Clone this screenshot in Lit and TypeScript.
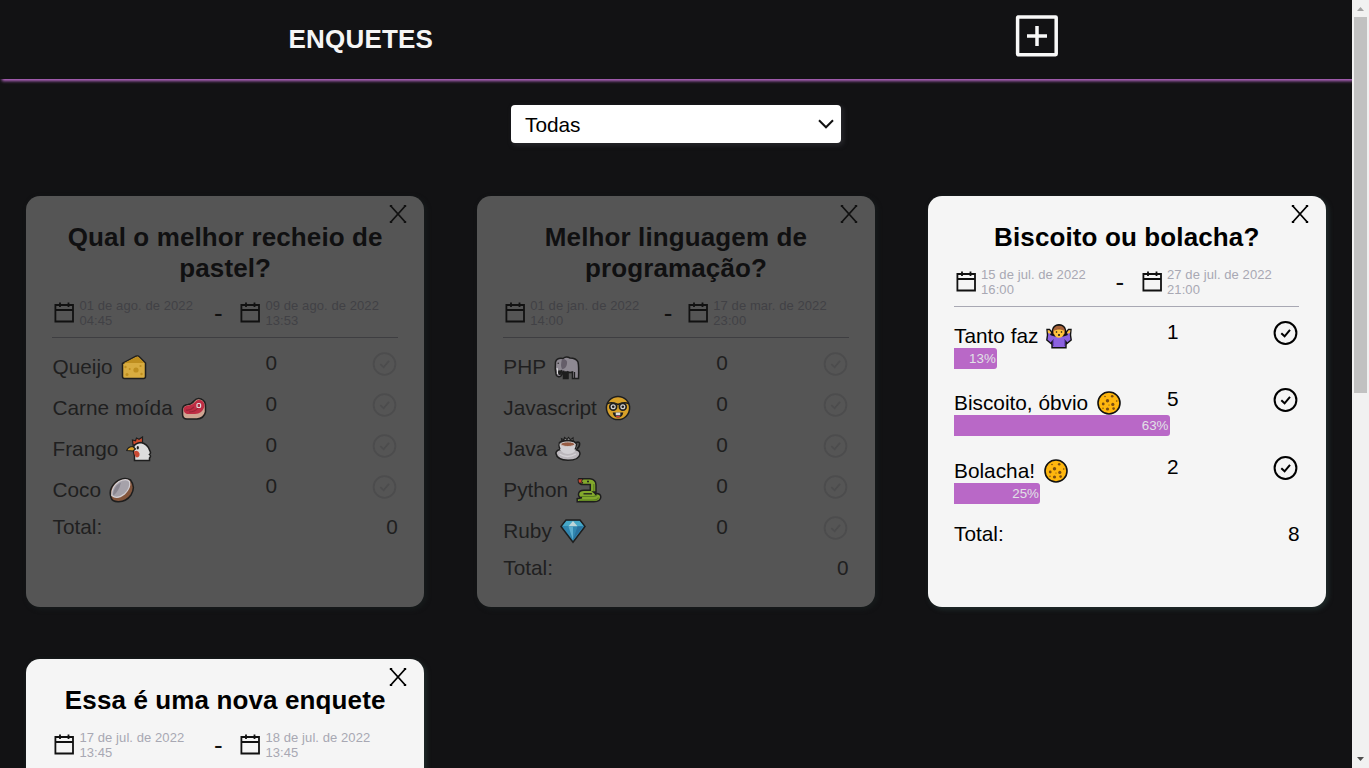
import { LitElement, html, svg, css } from "lit";
import { customElement, property } from "lit/decorators.js";
import { classMap } from "lit/directives/class-map.js";

interface Option { name: string; emoji: string; votes: number; }
interface Poll {
  title: string;
  start: [string, string];
  end: [string, string];
  closed: boolean;
  narrow?: boolean;
  options: Option[];
}

const INK = "#111";

const emojis: Record<string, unknown> = {
  cheese: svg`
    <path d="M1.5 9.5 15 2.2Q17 1.4 18.5 3L24.5 9V22.5Q24.5 24.5 22.5 24.5H3.5Q1.5 24.5 1.5 22.5Z" fill="#f9c23c" stroke=${INK} stroke-width="1.5"/>
    <path d="M3 9 15 3Q17 2 18 3.5L23.5 9Z" fill="#d99d12"/>
    <g fill="#d99d12"><circle cx="15" cy="16" r="2.6"/><circle cx="6" cy="20.5" r="1.5"/><circle cx="8.7" cy="15" r="1"/><circle cx="19.5" cy="12" r="1.1"/><circle cx="20.5" cy="20" r="1.2"/><circle cx="4.5" cy="13" r="1.2"/></g>`,
  meat: svg`
    <path d="M1.5 14Q2 10 7 9.5Q11 9 13 6Q16 2.5 20 4Q25 6 24.5 12V17Q23 23.5 16 24H6Q1.5 24 1.5 19Z" fill="#efb9a2" stroke=${INK} stroke-width="1.5"/>
    <path d="M2.6 14Q3 10.5 8 10.5Q12 10 14 7Q17 3.7 20 5.2Q24 7 23.3 12Q21 19 14 19H6Q2.5 18 2.6 14Z" fill="#da2440"/>
    <path d="M5 15Q9 16 13 12M8 17Q14 17 17 13" fill="none" stroke="#a8182f" stroke-width="1.2"/>
    <rect x="16" y="8.5" width="3.6" height="4" rx="1" fill="#c81e3a" stroke="#fff" stroke-width="1.2"/>`,
  chicken: svg`
    <path d="M7 9 6.5 4 9.5 4.8 10.5 2 13 3.2 16.5 1V8Z" fill="#f04a24" stroke=${INK} stroke-width="1.2"/>
    <path d="M8.5 24.5V20Q7 15 7.5 11Q9 7 15 6.5Q21.5 8 23.5 14Q25.5 17 23.5 18.5Q25.5 20 23.5 22V24.5Z" fill="#fff" stroke=${INK} stroke-width="1.5"/>
    <path d="M.8 14.5Q2 10.5 7 10.5L9.5 13 7 15Z" fill="#f9b21a" stroke=${INK} stroke-width="1.2"/>
    <path d="M8 15.5Q12 13.5 13.5 17.5Q14 21 11 21.5Q8.5 21 8 15.5Z" fill="#e8462a"/>
    <ellipse cx="11.8" cy="11.8" rx="1.1" ry="1.8" fill=${INK}/>`,
  coconut: svg`
    <path d="M2 20.5Q-1 12 7 5Q15-1 21.5 3Q27 10 22 18Q17 25 9 24.7Q3 24.5 2 20.5Z" fill="#8f5637" stroke=${INK} stroke-width="1.5"/>
    <path d="M2.8 18.5Q2 10 10 4.5Q17.5 .8 20.5 4.5Q22 11 15.5 17Q8 23 2.8 18.5Z" fill="#bbb6c0" stroke="#f3eff5" stroke-width="1.2"/>
    <path d="M4 17Q5 9 12 5.5Q10 14 4.5 18.5Z" fill="#96919e"/>`,
  elephant: svg`
    <path d="M2 20Q.8 15 1.5 8Q3 3.5 9 4.5Q12 1.8 16 4Q22 4 24 8Q25 12 24.5 24.5H18.5V18Q16 19 14 18V24.5H9.5V17.5Q8.5 18 8 20Q7 23.5 4 22.5Q2 22 2 20Z" fill="#9d96a2" stroke=${INK} stroke-width="1.5"/>
    <path d="M8 5Q14 5 13 10Q12 15 8 15Q6 12 8 5Z" fill="#69616f"/>
    <path d="M3 14Q4 17 3.5 19.5H4.6Q5.5 16.5 7 16.5" fill="none" stroke="#fff" stroke-width="1.1"/>
    <path d="M5 16.5Q4 20 6 20.5Q9 18 7.5 16M10 18H13.5V24H10ZM20.5 18V24" fill=${INK} stroke=${INK} stroke-width="1.3"/>
    <circle cx="4.2" cy="9.3" r=".7" fill=${INK}/>`,
  nerd: svg`
    <circle cx="13" cy="13" r="11.6" fill="#f9b51f" stroke=${INK} stroke-width="1.5"/>
    <path d="M2 8.7Q7 6.5 13 9.5Q19 6.5 24 8.7" fill="none" stroke=${INK} stroke-width="1.7"/>
    <g fill="#f7f2f2" stroke=${INK} stroke-width="1.7"><circle cx="8.2" cy="11.7" r="3.4"/><circle cx="17.8" cy="11.7" r="3.4"/></g>
    <circle cx="8.2" cy="11.7" r="1.3" fill=${INK}/><circle cx="17.8" cy="11.7" r="1.3" fill=${INK}/>
    <path d="M7.7 17.5H18.3Q17.5 22.5 13 22.5T7.7 17.5Z" fill=${INK}/>
    <path d="M10.7 17.5H15.3V20.3H10.7Z" fill="#fff"/><path d="M10.5 21.5Q13 20 15.5 21.5L13 22.8Z" fill="#e93b35"/>`,
  coffee: svg`
    <path d="M7 5.5 6.5 2.7 9 3.8 9.5 1.5 12 3.5 13.5 1.5 15.5 3.8 18 2 18 5.5Z" fill="#eee" stroke=${INK} stroke-width="1.2"/>
    <path d="M21 6.5Q25.3 5 24.5 9Q24 12.5 20.5 13" fill="none" stroke=${INK} stroke-width="1.7"/>
    <path d="M.8 17Q2 13.5 6 13.5H20Q25 14 25 18Q24 24.2 13 24.3Q2 24 .8 17Z" fill="#d5d0d6" stroke=${INK} stroke-width="1.5"/>
    <path d="M3.5 7.5H22Q22 15 17.5 17Q13 19 8.5 17Q3.5 14 3.5 7.5Z" fill="#f2eff4"/>
    <path d="M5 13Q3 9 4.5 6.5Q7 4.2 12.5 4.2Q20 4.2 21.5 8Q21.5 11 20 13.5" fill="none" stroke=${INK} stroke-width="1.4"/>
    <ellipse cx="12.8" cy="8.2" rx="7" ry="2.3" fill="#a85e40" stroke="#efe8e8"/>
    <path d="M4.5 18Q12 23 21 18" fill="none" stroke="#f5f2f7" stroke-width="1.3"/>`,
  snake: svg`
    <path d="M3 1.8H14Q20 2.5 20 8V15H17.5Q20 17 20 18.5V16.5Q24.8 16.5 24.8 20Q24.5 24.7 18 24.7H1.2V21.7L6 20.7Q2.3 20.5 2.5 17Q3 13.3 8 13.3H14.3V7.5H7Q3.5 7.5 3 5Z" fill="#8fbf23" stroke=${INK} stroke-width="1.5"/>
    <path d="M5 19.5H17.5Q20 19 21 18M3 23.2H17Q21.5 23 22.5 20.5M17.8 7V14" fill="none" stroke="#5c8a16" stroke-width="1.2"/>
    <path d="M7.5 16.8H16" fill="none" stroke=${INK} stroke-width="1.3"/>
    <path d="M2 2H7L5.5 4.2 7 6H2.5Z" fill="#f3482b" stroke=${INK} stroke-width=".9"/><circle cx="12" cy="4.6" r="1" fill=${INK}/>`,
  gem: svg`
    <path d="M6 2H20L25 8.5 13 24.3 1 8.5Z" fill="#2893c6" stroke=${INK} stroke-width="1.5"/>
    <path d="M6.5 3H19.5L23.5 8H2.5Z" fill="#44bde5"/>
    <path d="M13 3 17.5 8.2H8.5Z" fill="#d9f5fa"/><path d="M8.5 8.5H13V22Z" fill="#5fc5ee"/><path d="M23 8.5H17.5L13 22Z" fill="#1f78b0"/>`,
  shrug: svg`
    <path d="M6.5 12Q5 2.5 13 1.8Q21 2.5 19.5 12Z" fill="#9b5631" stroke=${INK} stroke-width="1.4"/>
    <path d="M1 6.5H3.5L5.5 9 5 11.5Q8.5 13 13 13T21 11.5L20.5 9 22.5 6.5H25L24.5 12 25.2 17 21 20.5 20 19V24.7H6V19L5 20.5 .8 17 1.5 12Z" fill="#8c62df" stroke=${INK} stroke-width="1.4"/>
    <path d="M1.6 7.2H3.3L5 9.5 4.3 10.8 2 10ZM24.4 7.2H22.7L21 9.5 21.7 10.8 24 10Z" fill="#ffc43d"/>
    <path d="M7.8 6.5H18.2V10Q17.3 14.6 13 14.8Q8.7 14.6 7.8 10Z" fill="#ffc43d"/>
    <path d="M7.3 8Q8 3 13 3Q18 3 18.7 8Q15 7 13 5Q11 7 7.3 8Z" fill="#a76339"/>
    <circle cx="10.5" cy="9" r=".8" fill=${INK}/><circle cx="15.5" cy="9" r=".8" fill=${INK}/><circle cx="13" cy="12" r="1" fill=${INK}/>
    <path d="M7.5 16V23M18.5 16V23" stroke="#6843bd" stroke-width="1"/>`,
  cookie: svg`
    <circle cx="13" cy="13" r="11" fill="#ffb70e" stroke=${INK} stroke-width="1.6"/>
    <g fill="#7b4d12"><circle cx="11.5" cy="10.7" r="1.7"/><circle cx="16.8" cy="14.4" r="1.6"/><circle cx="11.5" cy="19" r="1.6"/><circle cx="7.2" cy="14" r="1.4"/><circle cx="16.2" cy="6.3" r="1.3"/><circle cx="17.6" cy="18.6" r="1.3"/><circle cx="9" cy="6.5" r=".8"/><circle cx="20.7" cy="11" r=".8"/><circle cx="7" cy="18.3" r=".7"/><circle cx="13" cy="15" r=".6"/></g>`,
};

const polls: Poll[] = [
  {
    title: "Qual o melhor recheio de pastel?",
    start: ["01 de ago. de 2022", "04:45"], end: ["09 de ago. de 2022", "13:53"], closed: true,
    options: [
      { name: "Queijo", emoji: "cheese", votes: 0 },
      { name: "Carne moída", emoji: "meat", votes: 0 },
      { name: "Frango", emoji: "chicken", votes: 0 },
      { name: "Coco", emoji: "coconut", votes: 0 },
    ],
  },
  {
    title: "Melhor linguagem de programação?",
    start: ["01 de jan. de 2022", "14:00"], end: ["17 de mar. de 2022", "23:00"], closed: true, narrow: true,
    options: [
      { name: "PHP", emoji: "elephant", votes: 0 },
      { name: "Javascript", emoji: "nerd", votes: 0 },
      { name: "Java", emoji: "coffee", votes: 0 },
      { name: "Python", emoji: "snake", votes: 0 },
      { name: "Ruby", emoji: "gem", votes: 0 },
    ],
  },
  {
    title: "Biscoito ou bolacha?",
    start: ["15 de jul. de 2022", "16:00"], end: ["27 de jul. de 2022", "21:00"], closed: false,
    options: [
      { name: "Tanto faz", emoji: "shrug", votes: 1 },
      { name: "Biscoito, óbvio", emoji: "cookie", votes: 5 },
      { name: "Bolacha!", emoji: "cookie", votes: 2 },
    ],
  },
  {
    title: "Essa é uma nova enquete",
    start: ["17 de jul. de 2022", "13:45"], end: ["18 de jul. de 2022", "13:45"], closed: false,
    options: [],
  },
];

@customElement("poll-card")
class PollCard extends LitElement {
  @property({ attribute: false }) poll!: Poll;

  static styles = css`
    :host { display: block; }
    .card {
      position: relative; box-sizing: border-box; height: 411px; padding: 26px 26.1px;
      border-radius: 14px; background: #f5f5f5; color: #000;
      box-shadow: 2px 2px 4px 1px #1e2828;
    }
    .closed { background: #555; color: #1f1f20; box-shadow: 2px 2px 4px 1px #161a1b; }
    .close { position: absolute; top: 9px; right: 17px; width: 18px; height: 18px; stroke: #000; stroke-width: 1.8; fill: none; }
    .closed .close { stroke: #111; }
    h2 { margin: 0; font-size: 26px; line-height: 31px; letter-spacing: .12px; text-align: center; font-weight: 700; }
    .closed h2 { color: #101011; }
    .dates {
      display: grid; grid-template-columns: 161px 25px 1fr; height: 39px; margin-top: 14px;
      border-bottom: 1px solid #a8a8b3;
    }
    .narrow { grid-template-columns: 160px 23px 1fr; }
    .closed .dates { border-color: #3e3e41; }
    .date { display: flex; gap: 3px; font-size: 13px; line-height: 15px; letter-spacing: .08px; color: #a8a8b3; white-space: nowrap; }
    .closed .date { color: #414145; }
    .cal { width: 24px; height: 24px; margin-top: 2px; flex: none; fill: none; stroke: #111; stroke-width: 1.8; }
    .dash { font-size: 26px; line-height: 30px; color: #111; padding-left: .5px; }
    .list { padding-top: 13px; }
    .row { display: grid; grid-template-columns: 213px 1fr 26px; grid-template-rows: 33px auto; height: 41px; font-size: 20.8px; line-height: 24px; }
    .open .row { height: 67.25px; }
    .name { display: flex; gap: 8px; padding-top: 4px; height: 24px; white-space: nowrap; }
    .emoji { width: 26px; height: 26px; margin-top: -1px; flex: none; }
    .closed .emoji { opacity: .8; }
    .check { width: 26px; height: 26px; fill: none; stroke: #000; stroke-width: 2; }
    .closed .check { stroke: #4c4c4d; stroke-width: 1.8; }
    .bar {
      grid-column: 1 / -1; box-sizing: border-box; height: 21px; margin-top: -5px; padding-right: 1.5px;
      background: #b968c7; color: #e1e1e6; border-radius: 0 3px 3px 0; font-size: 13.3px; line-height: 22px; text-align: right;
    }
    .total { display: flex; justify-content: space-between; font-size: 20.8px; line-height: 24px; }
  `;

  private date([day, hour]: [string, string]) {
    return html`<div class="date">
      <svg class="cal" viewBox="0 0 24 24"><path d="M3.4 5H21V21.5H3.4ZM3.4 10H21M8 2.5V7M16.5 2.5V7"/></svg>
      <div><div>${day}</div><div>${hour}</div></div>
    </div>`;
  }

  render() {
    const p = this.poll;
    const total = p.options.reduce((sum, o) => sum + o.votes, 0);
    return html`<article class=${classMap({ card: true, closed: p.closed, open: !p.closed })}>
      <svg class="close" viewBox="0 0 18 18"><path d="M1.8 1 16.2 17M16.2 1 1.8 17M.8 1H3.2M14.8 1H17.2M.8 17H3.2M14.8 17H17.2"/></svg>
      <h2>${p.title}</h2>
      <div class=${classMap({ dates: true, narrow: !!p.narrow })}>
        ${this.date(p.start)}<span class="dash">-</span>${this.date(p.end)}
      </div>
      ${p.options.length ? html`<div class="list">
        ${p.options.map((o) => html`<div class="row">
          <div class="name"><span>${o.name}</span><svg class="emoji" viewBox="0 0 26 26">${emojis[o.emoji]}</svg></div>
          <span>${o.votes}</span>
          <svg class="check" viewBox="0 0 26 26"><circle cx="12.5" cy="13" r="10.9"/><path d="M8.3 13.2 11.6 16.3 17 9.8"/></svg>
          ${total ? html`<div class="bar" style="width:${(o.votes / total) * 100}%">${Math.round((o.votes / total) * 100)}%</div>` : ""}
        </div>`)}
        <div class="total"><span>Total:</span><span>${total}</span></div>
      </div>` : ""}
    </article>`;
  }
}

@customElement("app-root")
class AppRoot extends LitElement {
  static styles = css`
    :host { display: flex; height: 768px; overflow: hidden; background: #121214; font-family: "Liberation Sans", Arial, sans-serif; }
    .page { flex: 1; min-width: 0; overflow: hidden; }
    header {
      display: flex; justify-content: space-between; align-items: center; box-sizing: border-box;
      height: 79px; padding: 0 290.5px 0 288.5px; background: #121214; box-shadow: 2px 2px 3px #b968c7;
    }
    h1 { margin: -2px 0 0; font-size: 26px; letter-spacing: .2px; color: #f5f5f5; line-height: 30px; font-weight: 700; }
    .add { width: 50px; height: 50px; margin-top: -7px; fill: none; stroke: #f8f8f8; stroke-width: 3.5; }
    .select {
      display: flex; justify-content: space-between; align-items: center; box-sizing: border-box;
      width: 330px; height: 38px; margin: 26px auto 53px; padding: 0 7px 0 14px; border-radius: 4px;
      background: #fff; color: #000; font-size: 20.8px; line-height: 24px; box-shadow: 2px 2px 4px 1px #252529;
    }
    .select span { margin-top: 1px; }
    .chevron { width: 16px; height: 10px; fill: none; stroke: #111; stroke-width: 2; }
    .cards { display: grid; grid-template-columns: repeat(3, 397.6px); gap: 52px 53.2px; padding: 0 26.4px; }
    .scroll { display: flex; flex-direction: column; align-items: center; width: 17px; flex: none; background: #f1f1f1; }
    .arrow { width: 17px; height: 17px; flex: none; fill: #a3a3a3; }
    .down { fill: #505050; margin-top: auto; }
    .thumb { width: 13px; height: 376px; background: #c1c1c1; }
  `;

  render() {
    return html`
      <div class="page">
        <header>
          <h1>ENQUETES</h1>
          <svg class="add" viewBox="0 0 50 50"><rect x="5.6" y="6" width="38.6" height="37.7" rx=".6"/><path d="M25 15V35M15 25H35"/></svg>
        </header>
        <div class="select"><span>Todas</span><svg class="chevron" viewBox="0 0 16 10"><path d="M1 1.3 8 8.3 15 1.3"/></svg></div>
        <main class="cards">${polls.map((p) => html`<poll-card .poll=${p}></poll-card>`)}</main>
      </div>
      <div class="scroll">
        <svg class="arrow" viewBox="0 0 17 17"><path d="M5 11H12L8.5 7Z"/></svg>
        <div class="thumb"></div>
        <svg class="arrow down" viewBox="0 0 17 17"><path d="M5 6H12L8.5 10Z"/></svg>
      </div>`;
  }
}
